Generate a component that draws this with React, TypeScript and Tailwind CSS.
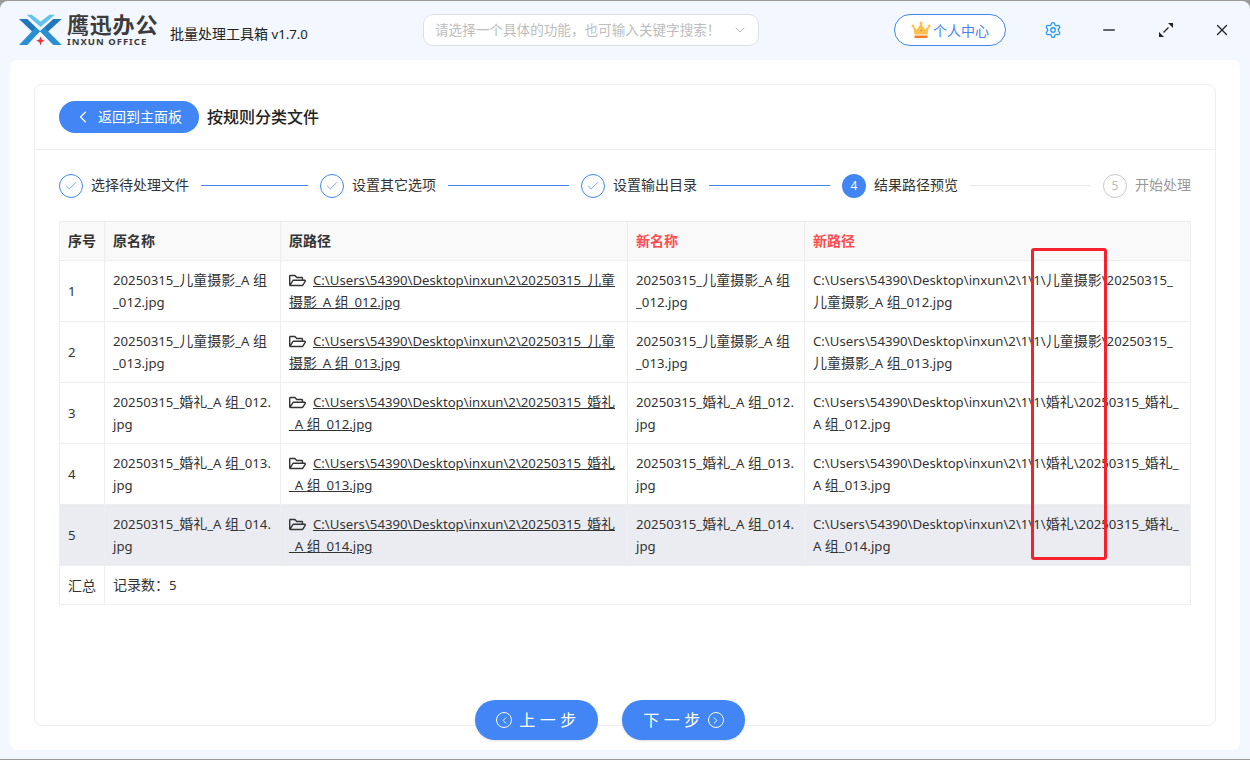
import { ChevronLeft, ChevronDown, Check, Settings, Minus, X, ChevronRight } from 'lucide-react';
import { FaRegFolderOpen } from 'react-icons/fa';

const GRID = 'grid grid-cols-[46px_176px_347px_177px_386px]';

const rows = [
    {
        name: ['20250315_儿童摄影_A 组', '_012.jpg'],
        path: ['C:\\Users\\54390\\Desktop\\inxun\\2\\20250315_儿童', '摄影_A 组_012.jpg'],
        target: ['C:\\Users\\54390\\Desktop\\inxun\\2\\1\\1\\儿童摄影\\20250315_', '儿童摄影_A 组_012.jpg'],
    },
    {
        name: ['20250315_儿童摄影_A 组', '_013.jpg'],
        path: ['C:\\Users\\54390\\Desktop\\inxun\\2\\20250315_儿童', '摄影_A 组_013.jpg'],
        target: ['C:\\Users\\54390\\Desktop\\inxun\\2\\1\\1\\儿童摄影\\20250315_', '儿童摄影_A 组_013.jpg'],
    },
    {
        name: ['20250315_婚礼_A 组_012.', 'jpg'],
        path: ['C:\\Users\\54390\\Desktop\\inxun\\2\\20250315_婚礼', '_A 组_012.jpg'],
        target: ['C:\\Users\\54390\\Desktop\\inxun\\2\\1\\1\\婚礼\\20250315_婚礼_', 'A 组_012.jpg'],
    },
    {
        name: ['20250315_婚礼_A 组_013.', 'jpg'],
        path: ['C:\\Users\\54390\\Desktop\\inxun\\2\\20250315_婚礼', '_A 组_013.jpg'],
        target: ['C:\\Users\\54390\\Desktop\\inxun\\2\\1\\1\\婚礼\\20250315_婚礼_', 'A 组_013.jpg'],
    },
    {
        name: ['20250315_婚礼_A 组_014.', 'jpg'],
        path: ['C:\\Users\\54390\\Desktop\\inxun\\2\\20250315_婚礼', '_A 组_014.jpg'],
        target: ['C:\\Users\\54390\\Desktop\\inxun\\2\\1\\1\\婚礼\\20250315_婚礼_', 'A 组_014.jpg'],
    },
];

// latin runs are a bit narrower than the CJK in the original font, so size them apart
function Mixed({ text }: { text: string }) {
    const parts = text.split(/([\u4e00-\u9fff\uff00-\uffef]+)/).filter(Boolean);
    return (
        <span className="text-[13.2px]">
            {parts.map((p, i) =>
                /[\u4e00-\u9fff\uff00-\uffef]/.test(p) ? (
                    <span key={i} className="text-[14px]">
                        {p}
                    </span>
                ) : (
                    <span key={i}>{p}</span>
                ),
            )}
        </span>
    );
}

function Logo() {
    return (
        <svg width="44" height="32" viewBox="0 0 44 32">
            <path d="M1 5h8.300L22 17.300 17.700 21z" fill="#1f78bd" />
            <path d="M43.700 5h-8.400L22 17.300l4.300 3.700z" fill="#1f78bd" />
            <path d="M1 31h8.300L22 17.300 17.700 13.500z" fill="#2a8fd0" />
            <path d="M43.700 31h-8.400L22 17.300l4.300-3.800z" fill="#2a8fd0" />
            <path d="M8.700 .7h5l8.800 6.800L31.500 .7H37L22.500 13z" fill="#63c3ee" />
            <path d="M22.500 22.500l1.200 3 3 1.200-3 1.200-1.200 3.600-1.200-3.600-3-1.200 3-1.200z" fill="#e8313a" />
        </svg>
    );
}

function Crown() {
    return (
        <svg width="20" height="18" viewBox="0 0 20 18">
            <path d="M2 5l4 3.500L10 2l4 6.500L18 5l-1.500 8.500h-13z" fill="#fcc04f" />
            <circle cx="2" cy="5" r="1.500" fill="#fcc04f" />
            <circle cx="10" cy="2" r="1.500" fill="#fcc04f" />
            <circle cx="18" cy="5" r="1.500" fill="#fcc04f" />
            <circle cx="10" cy="9.500" r="0.800" fill="#d9752b" />
            <rect x="3.500" y="14.500" width="13" height="2.500" fill="#f57c2a" />
        </svg>
    );
}

function ExpandIcon() {
    return (
        <svg width="14" height="14" viewBox="0 0 14 14" fill="#222">
            <path d="M4.500 9.500l5-5" stroke="#222" strokeWidth="1.300" />
            <path d="M14 0v5L9 0z" />
            <path d="M0 14V9l5 5z" />
        </svg>
    );
}

function Step({ label, state, n }: { label: string; state: 'done' | 'active' | 'todo'; n?: number }) {
    return (
        <div className="flex items-center gap-2 shrink-0">
            {state === 'done' && (
                <span className="w-6 h-6 rounded-full border border-[#4285f4] flex items-center justify-center">
                    <Check size={14} strokeWidth={1.2} className="text-[#4285f4]" />
                </span>
            )}
            {state === 'active' && (
                <span className="w-6 h-6 rounded-full bg-[#4285f4] text-white text-[12px] flex items-center justify-center">
                    {n}
                </span>
            )}
            {state === 'todo' && (
                <span className="w-6 h-6 rounded-full border border-[#c8c8c8] text-[#bbbbbb] text-[12px] flex items-center justify-center">
                    {n}
                </span>
            )}
            <span className={state === 'todo' ? 'text-[14px] text-[#9a9a9a] -mt-[2px]' : 'text-[14px] text-[#333] -mt-[2px]'}>{label}</span>
        </div>
    );
}

function StepLine({ done }: { done: boolean }) {
    return <div className={done ? 'flex-1 h-px bg-[#4285f4] mx-3' : 'flex-1 h-px bg-[#e8e8e8] mx-3'} />;
}

export default function App() {
    return (
        <div className="w-[1250px] h-[760px] overflow-hidden bg-[#9a9a9a] text-[#333] font-['Noto_Sans','Noto_Sans_CJK_SC',sans-serif]">
            <div className="h-[758px] mt-px rounded-t-lg bg-[#f3f7ff] flex flex-col">
                {/* title bar */}
                <div className="h-[59px] shrink-0 flex items-center pb-[1px]">
                    <div className="ml-[18px] w-[44px] flex">
                        <Logo />
                    </div>
                    <div className="ml-[5px] w-[91px] flex flex-col items-start">
                        <span className="text-[22px] leading-[21px] font-bold tracking-[0.800px] text-[#3c3c3c] whitespace-nowrap">鹰迅办公</span>
                        <span className="mt-[2px] text-[9.500px] leading-[9px] font-bold tracking-[1px] text-[#3c3c3c] whitespace-nowrap">INXUN OFFICE</span>
                    </div>
                    <span className="ml-[12px] w-[253px] mt-[6px] text-[#222] whitespace-nowrap">
                        <Mixed text="批量处理工具箱 v1.7.0" />
                    </span>
                    <div className="w-[336px] h-[32px] rounded-[10px] bg-white border border-[#dcdfe6] flex items-center justify-between pl-[11px] pr-[10px]">
                        <span className="text-[13.600px] text-[#bdbdbd] whitespace-nowrap">请选择一个具体的功能，也可输入关键字搜索！</span>
                        <ChevronDown size={16} strokeWidth={1.2} className="text-[#a8a8a8]" />
                    </div>
                    <div className="ml-[135px] w-[112px] h-[32px] rounded-full bg-white border border-[#4285f4] flex items-center justify-center gap-[2px]">
                        <Crown />
                        <span className="text-[14px] text-[#4285f4]">个人中心</span>
                    </div>
                    <Settings size={18} strokeWidth={1.7} className="ml-[38px] text-[#2196f3]" />
                    <Minus size={18} strokeWidth={2} className="ml-[38px] text-[#333]" />
                    <div className="ml-[41px] flex">
                        <ExpandIcon />
                    </div>
                    <X size={18} strokeWidth={1.7} className="ml-[40px] text-[#222]" />
                </div>

                {/* white panel */}
                <div className="flex-1 ml-[10px] mr-[10px] mb-[9px] rounded-lg bg-white pt-6 px-6 relative">
                    <div className="h-[642px] rounded-lg border border-[#eeeeee]">
                        <div className="h-[65px] border-b border-[#eeeeee] flex items-center pl-6">
                            <button className="w-[140px] h-[32px] rounded-full bg-[#4285f4] text-white flex items-center pl-[14px] gap-[5px]">
                                <ChevronLeft size={20} strokeWidth={1.4} />
                                <span className="text-[14px] -mt-[1px]">返回到主面板</span>
                            </button>
                            <span className="ml-2 text-[16px] font-medium text-[#222]">按规则分类文件</span>
                        </div>

                        {/* steps: every step plus its line takes the same width */}
                        <div className="h-[71px] flex items-center pl-6 pr-6">
                            <div className="w-[261px] flex items-center">
                                <Step label="选择待处理文件" state="done" />
                                <StepLine done />
                            </div>
                            <div className="w-[261px] flex items-center">
                                <Step label="设置其它选项" state="done" />
                                <StepLine done />
                            </div>
                            <div className="w-[261px] flex items-center">
                                <Step label="设置输出目录" state="done" />
                                <StepLine done />
                            </div>
                            <div className="w-[261px] flex items-center">
                                <Step label="结果路径预览" state="active" n={4} />
                                <StepLine done={false} />
                            </div>
                            <Step label="开始处理" state="todo" n={5} />
                        </div>

                        {/* table */}
                        <div className="mx-6 w-[1132px] text-[14px] border-t border-[#eeeeee]">
                            <div className={`${GRID} h-[39px] bg-[#f9f9f9] border-b border-[#eeeeee] font-semibold pb-0`}>
                                <div className="pl-2 pb-[2px] flex items-center border-r border-l border-[#eeeeee]">序号</div>
                                <div className="pl-2 pb-[2px] flex items-center border-r border-[#eeeeee]">原名称</div>
                                <div className="pl-2 pb-[2px] flex items-center border-r border-[#eeeeee]">原路径</div>
                                <div className="pl-2 pb-[2px] flex items-center border-r border-[#eeeeee] text-[#ff4d4f]">新名称</div>
                                <div className="pl-2 pb-[2px] flex items-center border-r border-[#eeeeee] text-[#ff4d4f]">新路径</div>
                            </div>
                            {rows.map((row, i) => (
                                <div
                                    key={i}
                                    className={`${GRID} h-[61px] border-b border-[#eeeeee] leading-[22px] ${i === 4 ? 'bg-[#ebecf2]' : ''}`}
                                >
                                    <div className="pl-2 flex items-center border-r border-l border-[#eeeeee]">
                                        <Mixed text={String(i + 1)} />
                                    </div>
                                    <div className="pl-2 flex flex-col justify-center whitespace-nowrap border-r border-[#eeeeee]">
                                        <Mixed text={row.name[0]} />
                                        <Mixed text={row.name[1]} />
                                    </div>
                                    <div className="pl-2 flex flex-col justify-center whitespace-nowrap border-r border-[#eeeeee]">
                                        <span className="flex items-center">
                                            <FaRegFolderOpen size={17} className="mr-[7px] text-[#333]" />
                                            <span className="underline">
                                                <Mixed text={row.path[0]} />
                                            </span>
                                        </span>
                                        <span className="underline">
                                            <Mixed text={row.path[1]} />
                                        </span>
                                    </div>
                                    <div className="pl-2 flex flex-col justify-center whitespace-nowrap border-r border-[#eeeeee]">
                                        <Mixed text={row.name[0]} />
                                        <Mixed text={row.name[1]} />
                                    </div>
                                    <div className="pl-2 flex flex-col justify-center whitespace-nowrap border-r border-[#eeeeee]">
                                        <Mixed text={row.target[0]} />
                                        <Mixed text={row.target[1]} />
                                    </div>
                                </div>
                            ))}
                            <div className={`${GRID} h-[39px] border-b border-[#eeeeee]`}>
                                <div className="pl-2 flex items-center border-r border-l border-[#eeeeee]">汇总</div>
                                <div className="pl-2 flex items-center col-span-4 border-r border-[#eeeeee]">
                                    <Mixed text="记录数：5" />
                                </div>
                            </div>
                        </div>
                    </div>

                    {/* footer buttons sit over the card edge */}
                    <div className="absolute left-0 right-0 top-[640px] pr-[30px] flex justify-center gap-6">
                        <button className="w-[123px] h-[40px] rounded-full bg-[#4285f4] text-white flex items-center justify-center gap-[7px] shadow-sm">
                            <span className="w-4 h-4 rounded-full border-[1.500px] border-white flex items-center justify-center">
                                <ChevronLeft size={11} strokeWidth={2} />
                            </span>
                            <span className="text-[16px] tracking-[4.500px] -mr-[4px]">上一步</span>
                        </button>
                        <button className="w-[123px] h-[40px] rounded-full bg-[#4285f4] text-white flex items-center justify-center gap-[3px] shadow-sm">
                            <span className="text-[16px] tracking-[4.500px]">下一步</span>
                            <span className="w-4 h-4 rounded-full border-[1.500px] border-white flex items-center justify-center">
                                <ChevronRight size={11} strokeWidth={2} />
                            </span>
                        </button>
                    </div>

                    {/* red annotation over the table */}
                    <div className="absolute left-[1021px] top-[188px] w-[76px] h-[312px] border-[3px] border-[#f5222d] rounded-[3px]" />
                </div>
            </div>
        </div>
    );
}
